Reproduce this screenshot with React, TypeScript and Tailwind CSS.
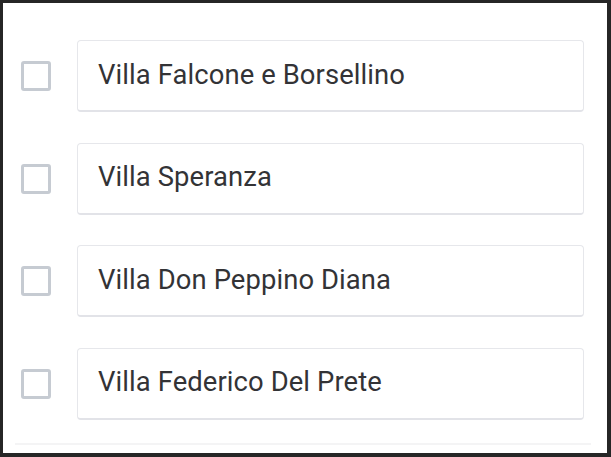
import React from 'react';

const villas = [
  'Villa Falcone e Borsellino',
  'Villa Speranza',
  'Villa Don Peppino Diana',
  'Villa Federico Del Prete',
];

export default function App() {
  return (
    <div className="w-[611px] h-[457px] bg-[#262626] pt-[3px] pl-[3px] pr-[4px] pb-[4px]">
      <div className="h-full w-full bg-white flex flex-col" style={{ fontFamily: 'Roboto, "Noto Sans", sans-serif' }}>
        <div className="flex flex-col gap-[30.5px] pt-[37px] pl-[18px] pr-[23px]">
          {villas.map((name) => (
            <div key={name} className="flex items-center gap-[26px]">
              <div className="w-[30px] h-[30px] shrink-0 rounded-[3px] border-[3px] border-[#c6cbd2] bg-white" />
              <div className="flex-1 h-[72px] flex items-center pl-[20px] rounded-[4px] border border-[#e6e7eb] border-b-2 border-b-[#e2e3e8] bg-white">
                <span className="text-[27.4px] leading-none tracking-[0.1px] text-[#333336]">{name}</span>
              </div>
            </div>
          ))}
        </div>
        <div className="mt-[23px] ml-[12px] mr-[16px] h-[2px] bg-[#f4f4f5]" />
      </div>
    </div>
  );
}
